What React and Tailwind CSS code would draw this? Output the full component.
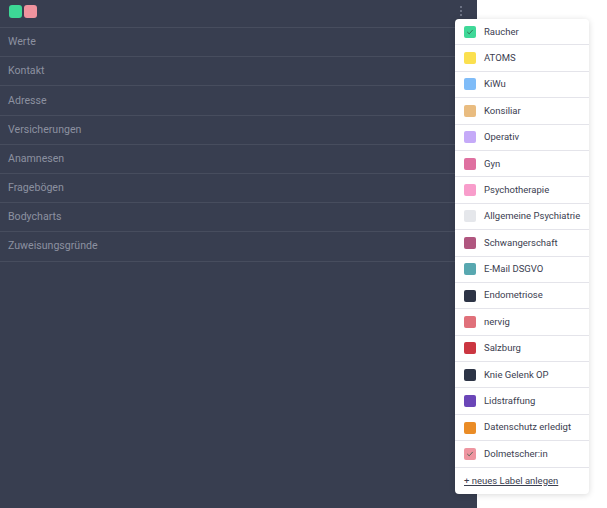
import React from 'react';

const sections = ['Werte', 'Kontakt', 'Adresse', 'Versicherungen', 'Anamnesen', 'Fragebögen', 'Bodycharts', 'Zuweisungsgründe'];

const labels = [
    { name: 'Raucher', color: 'bg-[#3fd898]', checked: true },
    { name: 'ATOMS', color: 'bg-[#fbe04f]' },
    { name: 'KiWu', color: 'bg-[#7fbcf8]' },
    { name: 'Konsiliar', color: 'bg-[#e9bc80]' },
    { name: 'Operativ', color: 'bg-[#c5aaf8]' },
    { name: 'Gyn', color: 'bg-[#df70a0]' },
    { name: 'Psychotherapie', color: 'bg-[#f89dcb]' },
    { name: 'Allgemeine Psychiatrie', color: 'bg-[#e5e7eb]' },
    { name: 'Schwangerschaft', color: 'bg-[#b0567f]' },
    { name: 'E-Mail DSGVO', color: 'bg-[#58a8b0]' },
    { name: 'Endometriose', color: 'bg-[#2d3446]' },
    { name: 'nervig', color: 'bg-[#e0707a]' },
    { name: 'Salzburg', color: 'bg-[#cb3641]' },
    { name: 'Knie Gelenk OP', color: 'bg-[#2d3446]' },
    { name: 'Lidstraffung', color: 'bg-[#6b46b8]' },
    { name: 'Datenschutz erledigt', color: 'bg-[#ea8c26]' },
    { name: 'Dolmetscher:in', color: 'bg-[#ee95a0]', checked: true },
];

function Check() {
    return (
        <svg width="8" height="8" viewBox="0 0 8 8" fill="none">
            <path d="M1.5 4.2 L3.2 5.8 L6.5 2.2" stroke="#2f5d48" strokeWidth="1" strokeLinecap="round" strokeLinejoin="round" opacity="0.8" />
        </svg>
    );
}

export default function App() {
    return (
        <div className="relative flex w-[607px] h-[508px] bg-white font-['Roboto',sans-serif]">
            <div className="w-[477px] h-full bg-[#383e50] flex flex-col">
                <div className="h-[28px] flex items-center justify-between pl-[9px] pr-[14px] border-b border-[#474d5e]">
                    <div className="flex gap-[2px] -mt-[4px]">
                        <div className="w-[13px] h-[13px] rounded-[3px] bg-[#3dd896]" />
                        <div className="w-[13px] h-[13px] rounded-[3px] bg-[#f0939e]" />
                    </div>
                    <svg width="4" height="12" viewBox="0 0 4 12" className="-mt-[6px]">
                        <circle cx="2" cy="2" r="1" fill="#7d8394" />
                        <circle cx="2" cy="6" r="1" fill="#7d8394" />
                        <circle cx="2" cy="10" r="1" fill="#7d8394" />
                    </svg>
                </div>
                {sections.map((s) => (
                    <div key={s} className="h-[29.2px] flex items-center pl-[8px] border-b border-[#474d5e] text-[10.6px] text-[#8c91a0]">
                        {s}
                    </div>
                ))}
            </div>

            <div className="absolute left-[455px] top-[19px] w-[134px] bg-white rounded-[4px] shadow-[0_1px_6px_rgba(0,0,0,0.15)] flex flex-col">
                {labels.map((l) => (
                    <div key={l.name} className="h-[26.4px] flex items-center pl-[9px] gap-[8px] border-b border-[#e4e4ea] text-[9.5px] text-[#3b4050]">
                        <div className={`w-[12px] h-[12px] rounded-[2px] flex items-center justify-center ${l.color}`}>
                            {l.checked && <Check />}
                        </div>
                        <span>{l.name}</span>
                    </div>
                ))}
                <div className="h-[26px] flex items-center pl-[9px] text-[9.5px] text-[#3b4050] underline">
                    + neues Label anlegen
                </div>
            </div>
        </div>
    );
}
